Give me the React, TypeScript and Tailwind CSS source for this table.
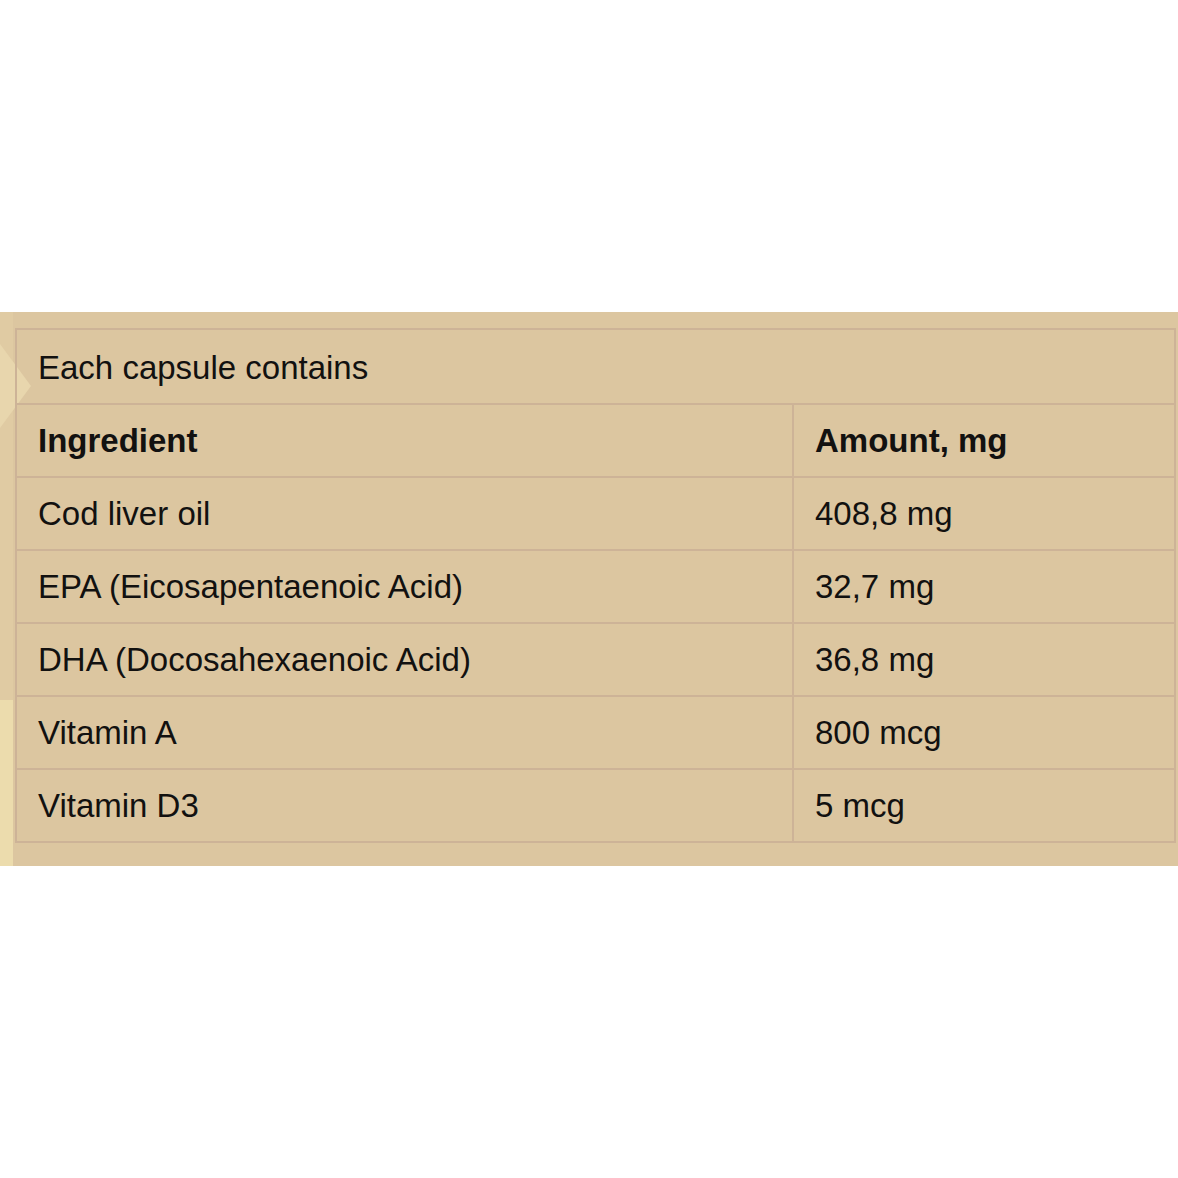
import * as React from 'react'

const rows = [
  ['Cod liver oil', '408,8 mg'],
  ['EPA (Eicosapentaenoic Acid)', '32,7 mg'],
  ['DHA (Docosahexaenoic Acid)', '36,8 mg'],
  ['Vitamin A', '800 mcg'],
  ['Vitamin D3', '5 mcg'],
]

export default function App() {
  return (
    <div className="min-h-[1178px] w-[1178px] bg-white pt-[312px] font-['Liberation_Sans',Arial,sans-serif] text-[#121110]">
      <div className="relative flex h-[554px] bg-[#dcc6a0]">
        {/* left decorative strip */}
        <div className="flex w-[13px] flex-col">
          <div className="flex-1 bg-[#e0cba3]" />
          <div className="h-[166px] bg-[#ecdcad]" />
        </div>
        <svg
          className="absolute left-0 top-[32px]"
          width="34"
          height="84"
          viewBox="0 0 34 84"
          aria-hidden="true"
        >
          <path d="M0 0 L31 42 L0 84 Z" fill="#e8d6ad" />
        </svg>

        <div className="relative flex-1 pb-[23px] pl-[2px] pr-[2px] pt-[16px]">
          <table className="w-full border-collapse border-2 border-[#cdb397] text-[33px] leading-none">
            <tbody>
              <tr className="h-[75px]">
                <td colSpan={2} className="px-[21px] pt-[2px]">
                  Each capsule contains
                </td>
              </tr>
              <tr className="h-[73px] border-t-2 border-[#cdb397]">
                <td className="w-[777px] border-r-2 border-[#cdb397] px-[21px] font-bold">
                  Ingredient
                </td>
                <td className="px-[21px] font-bold">Amount, mg</td>
              </tr>
              {rows.map(([name, amount]) => (
                <tr key={name} className="h-[73px] border-t-2 border-[#cdb397]">
                  <td className="border-r-2 border-[#cdb397] px-[21px]">{name}</td>
                  <td className="px-[21px]">{amount}</td>
                </tr>
              ))}
            </tbody>
          </table>
        </div>
      </div>
    </div>
  )
}
